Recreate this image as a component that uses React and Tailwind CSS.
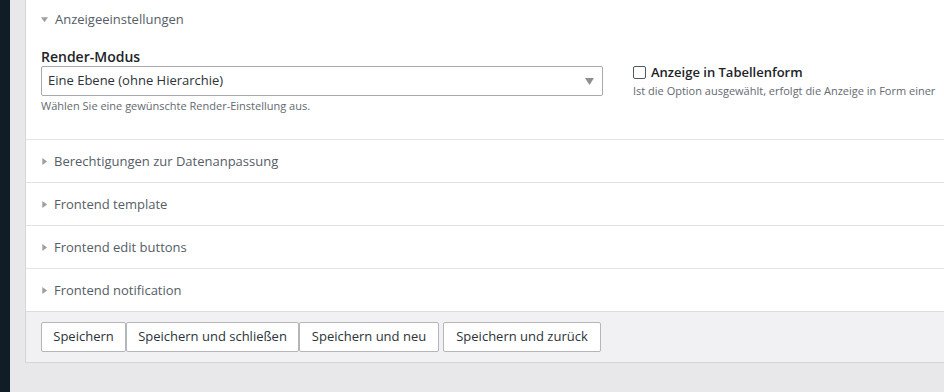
import React from 'react';

const FONT = { fontFamily: '"Open Sans", "Noto Sans", Arial, sans-serif' };

const Caret = ({ open }) => (
  <svg width="7" height="7" viewBox="0 0 8 8" className="shrink-0">
    {open ? <path d="M0 1.5h8L4 7z" fill="#9ca0a5" /> : <path d="M1.5 0v8L7 4z" fill="#9ca0a5" />}
  </svg>
);

const Section = ({ title }) => (
  <div className="h-[43px] border-t border-[#e2e4e7] flex items-center gap-[6px] pl-[15px] pt-[2px]">
    <Caret />
    <span className="text-[13px] text-[#555d66]">{title}</span>
  </div>
);

const buttons = [
  ['Speichern', 'w-[85px]'],
  ['Speichern und schließen', 'w-[173px]'],
  ['Speichern und neu', 'w-[140px]'],
  ['Speichern und zurück', 'w-[158px] ml-[4px]'],
];

export default function App() {
  return (
    <div style={FONT} className="w-[944px] h-[392px] flex bg-[#e8e8ea] overflow-hidden">
      <div className="w-[10px] bg-[#101c26] shrink-0" />
      <div className="flex-1 pl-[15px]">
        <div className="border-l border-b border-[#d5d6d9] bg-white">
          <div className="pb-[24px]">
            <div className="h-[38px] flex items-center gap-[7px] pl-[15px] pt-[1px]">
              <Caret open />
              <span className="text-[13px] text-[#555d66]">Anzeigeeinstellungen</span>
            </div>
            <div className="flex pl-[15px] pt-[10px]">
              <div className="w-[562px]">
                <div className="text-[14px] font-semibold text-[#1d2327] leading-[18px]">Render-Modus</div>
                <div className="h-[30px] border border-[#a7aaad] rounded-[2px] flex items-center justify-between pl-[6px] pr-[8px]">
                  <span className="text-[13px] text-[#2c3338]">Eine Ebene (ohne Hierarchie)</span>
                  <svg width="9" height="7" viewBox="0 0 9 7"><path d="M0 0h9L4.5 7z" fill="#8c8f94" /></svg>
                </div>
                <div className="text-[11px] text-[#646970] mt-[2px]">Wählen Sie eine gewünschte Render-Einstellung aus.</div>
              </div>
              <div className="ml-[30px] pt-[15px] whitespace-nowrap">
                <div className="flex items-center gap-[5px]">
                  <span className="w-[13px] h-[13px] border-[1.5px] border-[#50575e] rounded-[2px] bg-white" />
                  <span className="text-[13px] font-semibold text-[#1d2327]">Anzeige in Tabellenform</span>
                </div>
                <div className="text-[11px] text-[#646970]">Ist die Option ausgewählt, erfolgt die Anzeige in Form einer</div>
              </div>
            </div>
          </div>
          <Section title="Berechtigungen zur Datenanpassung" />
          <Section title="Frontend template" />
          <Section title="Frontend edit buttons" />
          <Section title="Frontend notification" />
          <div className="h-[51px] bg-[#f1f1f3] border-t border-[#dcdcde] flex items-center pl-[15px]">
            {buttons.map(([label, w]) => (
              <button
                key={label}
                type="button"
                className={`${w} h-[30px] bg-white border border-[#b4b6b9] rounded-[2px] text-[13px] text-[#2c3338] flex items-center justify-center pt-[1px]`}
              >
                {label}
              </button>
            ))}
          </div>
        </div>
      </div>
    </div>
  );
}
